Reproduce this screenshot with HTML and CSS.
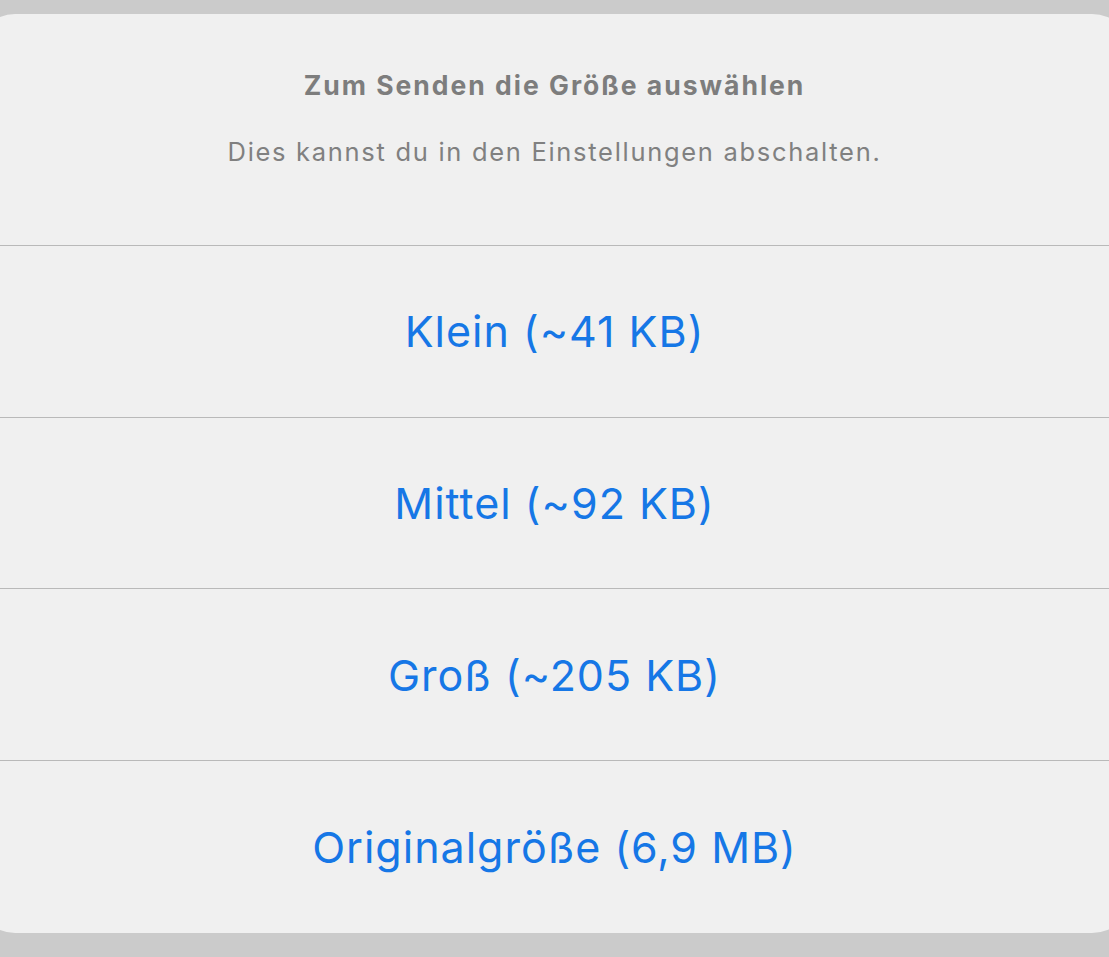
FILE: index.html
```html
<!DOCTYPE html>
<html lang="de">
<head>
<meta charset="utf-8">
<link rel="stylesheet" href="styles.css">
</head>
<body>
<div class="sheet">
  <div class="header">
    <div class="title">Zum Senden die Größe auswählen</div>
    <div class="subtitle">Dies kannst du in den Einstellungen abschalten.</div>
  </div>
  <div class="option">Klein (~41 KB)</div>
  <div class="option">Mittel (~92 KB)</div>
  <div class="option">Groß (~205 KB)</div>
  <div class="option">Originalgröße (6,9 MB)</div>
</div>
</body>
</html>
```
FILE: styles.css
```css
html, body {
  margin: 0;
  padding: 0;
  height: 100%;
  background: #cbcbcb;
  overflow: hidden;
}
body {
  font-family: Inter, "Noto Sans", sans-serif;
  padding-top: 14px;
  box-sizing: border-box;
}
.sheet {
  margin-left: -25px;
  width: 1157px;
  height: 919px;
  background: #f0f0f0;
  border-radius: 40px;
  display: flex;
  flex-direction: column;
}
.header {
  height: 232px;
  box-sizing: border-box;
  display: flex;
  flex-direction: column;
  align-items: center;
  padding-top: 56px;
  padding-left: 25px;
  padding-right: 23px;
  border-bottom: 1px solid #b9b9b9;
}
.title {
  font-size: 26.5px;
  font-weight: 700;
  color: #7d7d7d;
  line-height: 30px;
  letter-spacing: 2px;
}
.subtitle {
  margin-top: 37px;
  font-size: 25.5px;
  font-weight: 400;
  color: #808080;
  line-height: 30px;
  letter-spacing: 1.7px;
}
.option {
  height: 172px;
  box-sizing: border-box;
  display: flex;
  align-items: center;
  justify-content: center;
  padding-left: 25px;
  padding-right: 23px;
  font-size: 43px;
  letter-spacing: 1px;
  color: #1677e6;
  border-bottom: 1px solid #b9b9b9;
}
.option:last-child {
  border-bottom: none;
}
```
